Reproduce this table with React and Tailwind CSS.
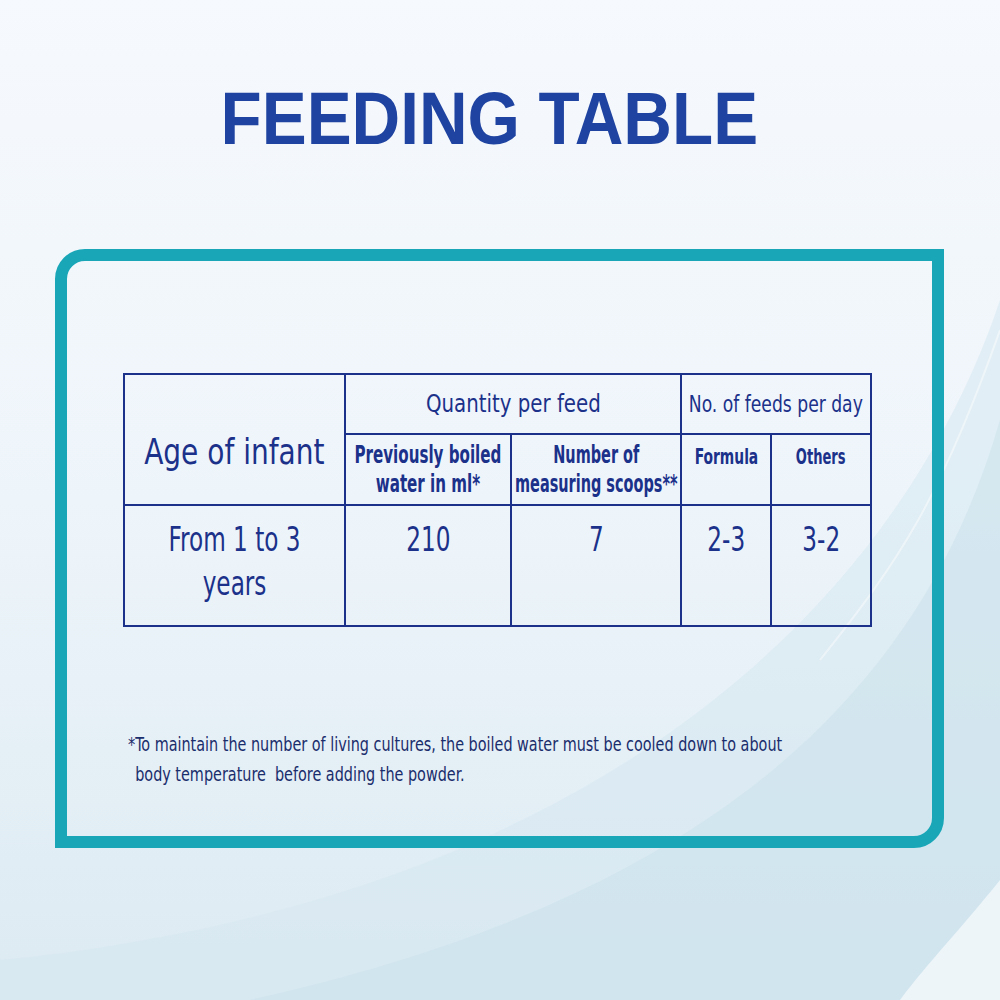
import React from "react";

const condensed = { fontFamily: '"DejaVu Sans Condensed", "DejaVu Sans", sans-serif' };

// Cell content, squeezed horizontally to get the narrow look of the print
const Squeeze = ({ children, className }) => (
  <div className="flex justify-center">
    <span className={`inline-block whitespace-nowrap ${className}`}>{children}</span>
  </div>
);

const FeedingTable = () => {
  return (
    <div className="relative w-[1000px] h-[1000px] overflow-hidden bg-gradient-to-b from-[#f6f9fd] via-[#eef5fa] to-[#dceaf2]">
      {/* Background swooshes */}
      <svg className="absolute inset-0" width="1000" height="1000" viewBox="0 0 1000 1000">
        <path d="M1000 300 C 900 600, 600 900, 0 960 L 0 1000 L 1000 1000 Z" fill="#d6e8f0" opacity="0.55" />
        <path d="M1000 420 C 920 700, 700 900, 250 1000 L 1000 1000 Z" fill="#c9e1eb" opacity="0.5" />
        <path d="M1000 330 C 940 500, 900 560, 820 660" stroke="#ffffff" strokeWidth="2" fill="none" opacity="0.45" />
        <path d="M1000 880 C 960 930, 930 960, 900 1000 L 1000 1000 Z" fill="#ffffff" opacity="0.6" />
      </svg>

      <div className="relative flex flex-col items-center">
        {/* Title */}
        <h1
          className="mt-[82px] mr-[21px] text-[74px] leading-none font-bold text-[#1f43a0] scale-x-[0.91] whitespace-nowrap"
          style={{ fontFamily: '"Liberation Sans", Arial, sans-serif' }}
        >
          FEEDING TABLE
        </h1>

        {/* Frame */}
        <div className="mt-[93px] ml-[-1px] w-[889px] h-[599px] border-[12px] border-[#19a7b8] rounded-tl-[30px] rounded-br-[30px] pt-[112px] pl-[56px]" style={condensed}>
          <table className="table-fixed w-[749px] border-collapse text-[#1b318a]">
            <colgroup>
              <col className="w-[221px]" />
              <col className="w-[166px]" />
              <col className="w-[170px]" />
              <col className="w-[90px]" />
              <col className="w-[100px]" />
            </colgroup>
            <tbody>
              <tr className="h-[60px]">
                <td rowSpan={2} className="border-2 border-[#1b318a] text-[35px] pt-[26px]">
                  <Squeeze className="scale-x-[0.89]">Age of infant</Squeeze>
                </td>
                <td colSpan={2} className="border-2 border-[#1b318a] text-[25px]">
                  <Squeeze className="scale-x-[0.88]">Quantity per feed</Squeeze>
                </td>
                <td colSpan={2} className="border-2 border-[#1b318a] text-[23px]">
                  <Squeeze className="scale-x-[0.83]">No. of feeds per day</Squeeze>
                </td>
              </tr>
              <tr className="h-[71px]">
                <td className="border-2 border-[#1b318a] text-[24px] font-bold leading-[29px]">
                  <Squeeze className="scale-x-[0.7] text-center">Previously boiled<br />water in ml*</Squeeze>
                </td>
                <td className="border-2 border-[#1b318a] text-[24px] font-bold leading-[29px]">
                  <Squeeze className="scale-x-[0.67] text-center">Number of<br />measuring scoops**</Squeeze>
                </td>
                <td className="border-2 border-[#1b318a] text-[22px] font-bold align-top pt-[5px]">
                  <Squeeze className="scale-x-[0.7]">Formula</Squeeze>
                </td>
                <td className="border-2 border-[#1b318a] text-[22px] font-bold align-top pt-[5px]">
                  <Squeeze className="scale-x-[0.66]">Others</Squeeze>
                </td>
              </tr>
              <tr className="h-[121px]">
                <td className="border-2 border-[#1b318a] text-[33px] leading-[44px] align-top pt-[12px]">
                  <Squeeze className="scale-x-[0.78] text-center">From 1 to 3<br />years</Squeeze>
                </td>
                <td className="border-2 border-[#1b318a] text-[33px] leading-[44px] align-top pt-[12px]">
                  <Squeeze className="scale-x-[0.78]">210</Squeeze>
                </td>
                <td className="border-2 border-[#1b318a] text-[33px] leading-[44px] align-top pt-[12px]">
                  <Squeeze className="scale-x-[0.78]">7</Squeeze>
                </td>
                <td className="border-2 border-[#1b318a] text-[33px] leading-[44px] align-top pt-[12px]">
                  <Squeeze className="scale-x-[0.78]">2-3</Squeeze>
                </td>
                <td className="border-2 border-[#1b318a] text-[33px] leading-[44px] align-top pt-[12px]">
                  <Squeeze className="scale-x-[0.78]">3-2</Squeeze>
                </td>
              </tr>
            </tbody>
          </table>

          {/* Footnote */}
          <div className="mt-[102px] ml-[5px] text-[20px] leading-[30px] text-[#1a2d6c] whitespace-nowrap origin-left scale-x-[0.8]">
            <p>*To maintain the number of living cultures, the boiled water must be cooled down to about</p>
            <p className="pl-[9px]">body temperature&nbsp; before adding the powder.</p>
          </div>
        </div>
      </div>
    </div>
  );
};

export default FeedingTable;
